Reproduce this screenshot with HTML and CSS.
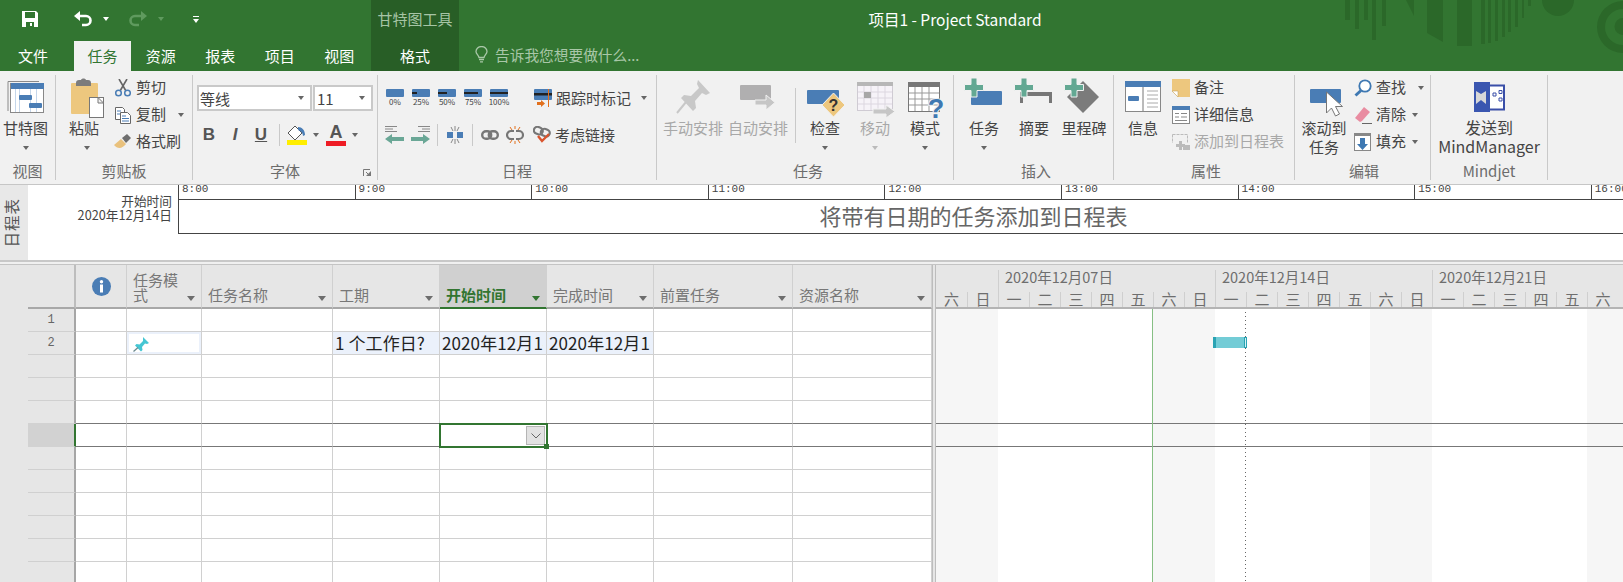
FILE: index.html
```html
<!DOCTYPE html>
<html lang="zh-CN">
<head>
<meta charset="utf-8">
<title>项目1 - Project Standard</title>
<link rel="stylesheet" href="styles.css">
</head>
<body>
<div class="app">
<header class="top">
  <svg class="deco" viewBox="0 0 300 71" width="300" height="71">
    <g fill="#2b6829">
      <path d="M22 0h5v20h-5zM32 0h4v29h-4zM41 0h4v20h-4zM49 0h4v40h-4zM59 0h4v26h-4z"/>
      <path d="M83 0h8v16zM104 0h16v42l-16-9zM134 0h15v46h-15z"/>
      <path d="M158 0h4v44h-4zM165 0h3v43h-3zM172 0h3v41h-3zM179 0h3v37h-3zM185 0h3v32h-3zM192 0h3v27h-3zM199 0h2v18h-2zM205 0h3v6h-3z"/>
      <circle cx="235" cy="0" r="16"/>
      <path d="M300 1a26 26 0 0 0 0 52v-8a18 18 0 0 1 0-36zM300 18a8 8 0 0 0 0 17z"/>
    </g>
  </svg>
  <div class="qat">
    <svg class="q-save" width="18" height="18" viewBox="0 0 18 18"><path fill="#fff" d="M1 1h14l2 2v14H1z"/><path fill="#327531" d="M4 2h10v6H4zM5 12h8v5H5z"/><path fill="#fff" d="M9 13h2v3H9z"/></svg>
    <svg class="q-undo" width="19" height="16" viewBox="0 0 19 16"><path fill="none" stroke="#fff" stroke-width="2.6" d="M4 5h8a4.500 4.500 0 0 1 0 9H8"/><path fill="#fff" d="M6 0v10L0 5z"/></svg>
    <i class="caret white q-c1"></i>
    <svg class="q-redo" width="19" height="16" viewBox="0 0 19 16"><path fill="none" stroke="#5f9a5e" stroke-width="2.600" d="M15 5H7a4.500 4.500 0 0 0 0 9h4"/><path fill="#5f9a5e" d="M13 0v10l6-5z"/></svg>
    <i class="caret dim q-c2"></i>
    <svg class="q-more" width="6" height="7" viewBox="0 0 6 7"><path fill="#fff" d="M0 0h6v1H0zM0 3h6L3 7z"/></svg>
  </div>
  <div class="ctx-title">甘特图工具</div>
  <div class="app-title">项目1 - Project Standard</div>
  <nav class="tabs">
    <span class="tab tab-file">文件</span>
    <span class="tab tab-on">任务</span>
    <span class="tab">资源</span>
    <span class="tab">报表</span>
    <span class="tab">项目</span>
    <span class="tab">视图</span>
  </nav>
  <div class="ctx-tab">格式</div>
  <div class="tell">
    <svg width="13" height="17" viewBox="0 0 13 17"><path fill="none" stroke="#a9c7a8" stroke-width="1.300" d="M4 11.500C3.500 9 1 8 1 5.500a5.500 5 0 0 1 11 0C12 8 9.500 9 9 11.500z"/><path stroke="#a9c7a8" stroke-width="1.300" d="M4 13.500h5M5 15.800h3"/></svg>
    <span>告诉我您想要做什么...</span>
  </div>
</header>

<section class="ribbon">
  <div class="g g-view">
    <div class="g-body">
      <div class="big w51">
        <svg class="ic" width="40" height="44" viewBox="0 0 40 44"><path fill="none" stroke="#8a8a8a" d="M2 36V6.500h31"/><rect x="4.500" y="8.500" width="33" height="29" fill="#fff" stroke="#888"/><rect x="5" y="8" width="33" height="6" fill="#4a7db5"/><path stroke="#c5d6ea" d="M9.500 14v23M13.500 14v23M24.500 14v23M30.500 14v23"/><rect x="13" y="20" width="13" height="5" rx="1" fill="#4a7db5"/><rect x="23" y="28" width="13" height="5" rx="1" fill="#4a7db5"/></svg>
        <span class="lb">甘特图</span><span class="cr"><i class="caret"></i></span>
      </div>
    </div>
    <div class="g-label">视图</div>
  </div>

  <div class="g g-clip">
    <div class="g-body row">
      <div class="big w56">
        <svg class="ic" width="40" height="44" viewBox="0 0 40 44"><rect x="7" y="8" width="27" height="31" rx="1" fill="#edc77e"/><path fill="#7c7c7c" d="M12 8c0-2 1-3 3-3h2c.5-2 4.500-2 5 0h2c2 0 3 1 3 3v3H12z"/><rect x="26.500" y="22.500" width="14" height="20" fill="#fff" stroke="#777" transform="translate(-1 0)"/><path fill="#f1f1f1" stroke="#777" d="M34 22.500l5.500 5.500H34z"/></svg>
        <span class="lb">粘贴</span><span class="cr cr-shift"><i class="caret"></i></span>
      </div>
      <div class="col">
        <div class="sm"><svg width="18" height="18" viewBox="0 0 18 18"><path stroke="#666" stroke-width="1.600" d="M5 0l7 12M13 0L6 12"/><g fill="none" stroke="#4a7db5" stroke-width="1.500"><circle cx="4.500" cy="14" r="2.800"/><circle cx="13.500" cy="14" r="2.800"/></g></svg><span>剪切</span></div>
        <div class="sm"><svg width="18" height="18" viewBox="0 0 18 18"><path fill="#fff" stroke="#666" d="M1.500 1.500h7l2 2v10h-9z"/><path fill="#fff" stroke="#666" d="M6.500 6.500h7l3 3v8h-10z"/><path stroke="#4a7db5" d="M3 5h4M3 8h3M8 10h4M8 12.500h7M8 15h7"/></svg><span>复制</span><i class="caret cp-c"></i></div>
        <div class="sm"><svg width="18" height="18" viewBox="0 0 18 18"><path fill="#e9c17c" d="M0 12l7-6 5 5c-3 4-8 6-12 1z"/><path fill="#6e6e6e" d="M8 5l5-4 4 4-5 5z"/></svg><span>格式刷</span></div>
      </div>
    </div>
    <div class="g-label">剪贴板</div>
  </div>

  <div class="g g-font">
    <div class="g-body">
      <div class="f-row1">
        <div class="sel-box sb-name"><span>等线</span><i class="caret"></i></div>
        <div class="sel-box sb-size"><span>11</span><i class="caret"></i></div>
      </div>
      <div class="f-row2">
        <span class="fb bold">B</span><span class="fb ital">I</span><span class="fb under">U</span>
        <i class="vsep f-sep"></i>
        <svg class="f-fill" width="20" height="22" viewBox="0 0 20 22"><path fill="#fff" stroke="#555" d="M8 2L1 9l7 7 7-7z"/><path fill="#4a7db5" d="M11 3c4 0 7 3 7 8l-2 1c0-3-2-5-5-6z"/><rect y="16" width="20" height="5" fill="#ffee00"/></svg>
        <i class="caret f-c1"></i>
        <span class="f-a">A<i></i></span>
        <i class="caret f-c2"></i>
      </div>
    </div>
    <div class="g-label">字体</div>
    <svg class="launch" width="8" height="8" viewBox="0 0 8 8"><path fill="none" stroke="#777" d="M.5 7V.5H7"/><path stroke="#777" d="M3 3l4 4"/><path fill="#777" d="M3 7h5V2z"/></svg>
  </div>

  <div class="g g-sched">
    <div class="g-body">
      <div class="s-row1">
        <div class="pct"><svg width="18" height="8" viewBox="0 0 18 8"><rect width="18" height="8" rx="1" fill="#4a7db5"/></svg><span>0%</span></div>
        <div class="pct"><svg width="18" height="8" viewBox="0 0 18 8"><rect width="18" height="8" rx="1" fill="#4a7db5"/><rect y="3" width="5" height="2" fill="#222"/></svg><span>25%</span></div>
        <div class="pct"><svg width="18" height="8" viewBox="0 0 18 8"><rect width="18" height="8" rx="1" fill="#4a7db5"/><rect y="3" width="9" height="2" fill="#222"/></svg><span>50%</span></div>
        <div class="pct"><svg width="18" height="8" viewBox="0 0 18 8"><rect width="18" height="8" rx="1" fill="#4a7db5"/><rect y="3" width="14" height="2" fill="#222"/></svg><span>75%</span></div>
        <div class="pct"><svg width="18" height="8" viewBox="0 0 18 8"><rect width="18" height="8" rx="1" fill="#4a7db5"/><rect y="3" width="18" height="2" fill="#222"/></svg><span>100%</span></div>
        <div class="sm track"><svg width="18" height="18" viewBox="0 0 18 18"><rect width="18" height="11" rx="1" fill="#4a7db5"/><rect y="4" width="18" height="2.500" fill="#222"/><path stroke="#e2701d" d="M14.500 0v18"/><path fill="#e2701d" d="M3 13h4v-2l4 3.500-4 3.500v-2H3z"/></svg><span>跟踪时标记</span><i class="caret tr-c"></i></div>
      </div>
      <div class="s-row2">
        <span class="tb"><svg width="20" height="18" viewBox="0 0 20 18"><path stroke="#888" d="M0 .5h12M0 3h8M0 5.500h12"/><path fill="#6aa796" d="M0 13l7-5v3h12v4H7v3z"/></svg></span>
        <span class="tb"><svg width="20" height="18" viewBox="0 0 20 18"><path stroke="#888" d="M8 .5h12M12 3h8M8 5.500h12"/><path fill="#6aa796" d="M20 13l-7-5v3H1v4h12v3z"/></svg></span>
        <i class="vsep s-sep"></i>
        <span class="tb"><svg width="16" height="18" viewBox="0 0 16 18"><rect y="6" width="6" height="6" fill="#4a7db5"/><rect x="10" y="6" width="6" height="6" fill="#4a7db5"/><path stroke="#888" d="M8 0v5M4 1l2 4M12 1l-2 4M8 13v5M4 17l2-4M12 17l-2-4"/></svg></span>
        <i class="vsep s-sep"></i>
        <span class="tb"><svg width="18" height="10" viewBox="0 0 18 10"><g fill="none" stroke="#777" stroke-width="2.400"><rect x="1.200" y="1.200" width="9" height="7.600" rx="3.800"/><rect x="7.800" y="1.200" width="9" height="7.600" rx="3.800"/></g></svg></span>
        <span class="tb"><svg width="18" height="18" viewBox="0 0 18 18"><path fill="none" stroke="#777" stroke-width="2.200" d="M8 5H5a4 4 0 0 0 0 8h3M10 5h3a4 4 0 0 1 0 8h-3"/><path stroke="#e2701d" d="M9 0v3M4 1l2 3M14 1l-2 3M9 15v3M4 17l2-3M14 17l-2-3"/></svg></span>
        <div class="sm consider"><svg width="18" height="18" viewBox="0 0 18 18"><g fill="none" stroke="#777" stroke-width="2.200"><rect x="1" y="1" width="9" height="7" rx="3.500" transform="rotate(20 5 4)"/><rect x="8" y="3" width="9" height="7" rx="3.500" transform="rotate(20 12 6)"/></g><path fill="none" stroke="#d9552e" stroke-width="2.400" d="M5 10l4 5 7-7"/></svg><span>考虑链接</span></div>
      </div>
    </div>
    <div class="g-label">日程</div>
  </div>

  <div class="g g-task">
    <div class="g-body row">
      <div class="big w60 off">
        <svg class="ic" width="40" height="44" viewBox="0 0 40 44"><path fill="#c8c8c8" d="M25 5l12 13-4 2-4-2-7 8 1 7-3 3L8 23l3-3 7 1 8-8-2-4z"/><path stroke="#c8c8c8" stroke-width="2" d="M13 27L4 38"/></svg>
        <span class="lb">手动安排</span>
      </div>
      <div class="big w60 off ml5">
        <svg class="ic" width="40" height="44" viewBox="0 0 40 44"><rect x="2" y="10" width="31" height="15" rx="1" fill="#b0afb0"/><path fill="#c6c6c6" stroke="#f1f1f1" d="M17 25h11v-5l9 7.500-9 7.500v-5H17z"/></svg>
        <span class="lb">自动安排</span>
      </div>
      <i class="vsep t-sep"></i>
      <div class="big w50">
        <svg class="ic" width="40" height="44" viewBox="0 0 40 44"><rect x="2" y="15" width="32" height="14" rx="1" fill="#4a7db5"/><path fill="#edc77e" stroke="#f1f1f1" d="M28.500 18L40 30 28.500 42 17 30z"/><text class="q-mark" x="28.500" y="36">?</text></svg>
        <span class="lb">检查</span><span class="cr"><i class="caret"></i></span>
      </div>
      <div class="big w50 off">
        <svg class="ic" width="40" height="44" viewBox="0 0 40 44"><rect x="2.500" y="7.500" width="35" height="28" fill="#f6f3f8" stroke="#cfcbd3"/><rect x="2" y="7" width="36" height="4" fill="#b7b7b7"/><path stroke="#dcd7e0" d="M9 11v24M16 11v24M23 11v24M30 11v24M3 17h34M3 23h34M3 29h34"/><rect x="9" y="17" width="7" height="6" fill="#a7a7a7"/><path fill="#c6c6c6" stroke="#f1f1f1" d="M18 34h13v-4l9 6.500-9 6.500v-4H18z"/></svg>
        <span class="lb">移动</span><span class="cr"><i class="caret pale"></i></span>
      </div>
      <div class="big w50">
        <svg class="ic" width="40" height="44" viewBox="0 0 40 44"><rect x="3.500" y="7.500" width="31" height="29" fill="#fff" stroke="#777"/><rect x="3" y="7" width="32" height="5" fill="#777"/><path stroke="#999" d="M10 12v24M17 12v24M24 12v24M4 18h30M4 24h30M4 30h30"/><text class="q-big" x="31" y="43">?</text></svg>
        <span class="lb">模式</span><span class="cr"><i class="caret"></i></span>
      </div>
    </div>
    <div class="g-label">任务</div>
  </div>

  <div class="g g-ins">
    <div class="g-body row">
      <div class="big w50">
        <svg class="ic" width="40" height="44" viewBox="0 0 40 44"><rect x="7" y="16" width="31" height="14" rx="1" fill="#4a7db5"/><path fill="#63a893" stroke="#f1f1f1" d="M7 3h6v6.500h6.500v6H13V22H7v-6.500H.5v-6H7z"/></svg>
        <span class="lb">任务</span><span class="cr"><i class="caret"></i></span>
      </div>
      <div class="big w50">
        <svg class="ic" width="40" height="44" viewBox="0 0 40 44"><path fill="#777" d="M6 17h32v11h-3v-7H9v7H6z"/><path fill="#63a893" stroke="#f1f1f1" d="M7 3h6v6.500h6.500v6H13V22H7v-6.500H.5v-6H7z"/></svg>
        <span class="lb">摘要</span>
      </div>
      <div class="big w50">
        <svg class="ic" width="40" height="44" viewBox="0 0 40 44"><path fill="#7b7b7b" d="M19 6l16 16-16 16L3 22z"/><path fill="#63a893" stroke="#f1f1f1" d="M7 3h6v6.500h6.500v6H13V22H7v-6.500H.5v-6H7z"/></svg>
        <span class="lb">里程碑</span>
      </div>
    </div>
    <div class="g-label">插入</div>
  </div>

  <div class="g g-prop">
    <div class="g-body row">
      <div class="big w50">
        <svg class="ic" width="40" height="44" viewBox="0 0 40 44"><rect x="2.500" y="6.500" width="35" height="30" fill="#fff" stroke="#888"/><rect x="2" y="6" width="36" height="6" fill="#4a7db5"/><path stroke="#777" d="M20 12v24"/><rect x="5" y="21" width="11" height="5" rx="1" fill="#4a7db5"/><path stroke="#aaa" d="M24 16h11M24 20h11M24 24h11M24 28h11M24 32h11"/></svg>
        <span class="lb">信息</span>
      </div>
      <div class="col ml4">
        <div class="sm"><svg width="18" height="18" viewBox="0 0 18 18"><path fill="#edc77e" d="M0 0h18v18H6l-6-6z"/><path fill="#fff" stroke="#c8a55f" d="M6 18v-6H0z" stroke-width=".6"/></svg><span>备注</span></div>
        <div class="sm"><svg width="18" height="18" viewBox="0 0 18 18"><rect x=".5" y=".5" width="17" height="17" fill="#fff" stroke="#888"/><rect width="18" height="4" fill="#4a7db5"/><path stroke="#888" d="M3 7.500h4M9 7.500h6M3 11h4M9 11h6M3 14.500h12"/></svg><span>详细信息</span></div>
        <div class="sm off"><svg width="18" height="18" viewBox="0 0 18 18"><path fill="none" stroke="#bbb" stroke-dasharray="3 1" d="M.5 1.500h15V10M.5 1.500V10"/><path fill="#bbb" d="M7 8h3v3h3v3h-3v3H7v-3H4v-3h3z"/><rect x="11" y="12" width="7" height="5" fill="#bbb"/></svg><span>添加到日程表</span></div>
      </div>
    </div>
    <div class="g-label">属性</div>
  </div>

  <div class="g g-edit">
    <div class="g-body row">
      <div class="big w52">
        <svg class="ic" width="40" height="44" viewBox="0 0 40 44"><rect x="6" y="14" width="31" height="14" rx="1" fill="#4a7db5"/><path fill="#fff" stroke="#777" d="M22.500 17v21l5-5 4 8 4-2-4-7.500h7z"/></svg>
        <span class="lb">滚动到<br>任务</span>
      </div>
      <div class="col ml4">
        <div class="sm"><svg width="18" height="18" viewBox="0 0 18 18"><circle cx="11" cy="7" r="5.700" fill="#fff" stroke="#3e78b2" stroke-width="1.800"/><path stroke="#3e78b2" stroke-width="3" d="M7 11.500L1.500 16.500"/></svg><span>查找</span><i class="caret ed-c1"></i></div>
        <div class="sm"><svg width="18" height="18" viewBox="0 0 18 18"><path fill="#e98ca1" d="M10 1l6 5-8 9-2 1-5-4z"/><path stroke="#666" d="M8 17.500h10"/></svg><span>清除</span><i class="caret ed-c2"></i></div>
        <div class="sm"><svg width="18" height="18" viewBox="0 0 18 18"><rect x=".5" y=".5" width="16" height="17" fill="#fff" stroke="#888"/><rect width="17" height="3" fill="#888"/><path fill="#3e78b2" d="M6 5h5v6h3l-5.500 6L3 11h3z"/></svg><span>填充</span><i class="caret ed-c2"></i></div>
      </div>
    </div>
    <div class="g-label">编辑</div>
  </div>

  <div class="g g-mind">
    <div class="g-body row">
      <div class="big wfull">
        <svg class="ic" width="40" height="44" viewBox="0 0 40 44"><rect x="20" y="10.500" width="15" height="24" fill="#fff" stroke="#3a4fa8" stroke-width="2"/><rect x="5" y="7" width="16" height="30" fill="#3a56b0"/><path fill="#d8d8d8" d="M7 16l5 3 5-3v13l-5-4-5 4z"/><path fill="none" stroke="#3a4fa8" d="M24 18h3v3h-3zM30 15.500h3v3h-3zM30 23h3v3h-3z"/></svg>
        <span class="lb lb-latin">发送到<br>MindManager</span>
      </div>
    </div>
    <div class="g-label">Mindjet</div>
  </div>
</section>

<section class="tl">
  <div class="tl-side"><span>日程表</span></div>
  <div class="tl-labels">开始时间<br>2020年12月14日</div>
  <div class="tl-main">
    <div class="ruler">
      <span>8:00</span><span>9:00</span><span>10:00</span><span>11:00</span><span>12:00</span><span>13:00</span><span>14:00</span><span>15:00</span><span>16:00</span>
    </div>
    <div class="tl-box">将带有日期的任务添加到日程表</div>
  </div>
</section>

<section class="main">
  <div class="strip"></div>
  <div class="sheet">
    <div class="hd hd-corner"></div>
    <div class="hd hd-info"><svg width="19" height="19" viewBox="0 0 19 19"><circle cx="9.500" cy="9.500" r="9.500" fill="#4a7db5"/><circle cx="9.500" cy="4.800" r="1.700" fill="#fff"/><rect x="8" y="7.500" width="3" height="8" fill="#fff"/></svg></div>
    <div class="hd"><span>任务模<br>式</span><i class="dd"></i></div>
    <div class="hd"><span>任务名称</span><i class="dd"></i></div>
    <div class="hd"><span>工期</span><i class="dd"></i></div>
    <div class="hd hd-on"><span>开始时间</span><i class="dd"></i></div>
    <div class="hd"><span>完成时间</span><i class="dd"></i></div>
    <div class="hd"><span>前置任务</span><i class="dd"></i></div>
    <div class="hd"><span>资源名称</span><i class="dd"></i></div>

    <div class="rh">1</div><div class="c"></div><div class="c"></div><div class="c"></div><div class="c"></div><div class="c"></div><div class="c"></div><div class="c"></div><div class="c"></div>

    <div class="rh">2</div><div class="c"></div>
    <div class="c c-pin"><svg width="16" height="15" viewBox="0 0 16 15"><path fill="#45c6d3" d="M10 0l6 6-2 1-2-.5-3 3.500.5 3-1.500 1.500L2 8.500 3.500 7l3 .5L10 4z"/><path stroke="#6d8a8f" stroke-width="1.300" d="M5 10.500L.5 14.500"/></svg></div>
    <div class="c"></div>
    <div class="c c-edit"><span class="clip">1 个工作日?</span></div>
    <div class="c c-edit"><span class="clip">2020年12月14日</span></div>
    <div class="c c-edit"><span class="clip">2020年12月14日</span></div>
    <div class="c"></div><div class="c"></div>

    <div class="rh"></div><div class="c"></div><div class="c"></div><div class="c"></div><div class="c"></div><div class="c"></div><div class="c"></div><div class="c"></div><div class="c"></div>
    <div class="rh"></div><div class="c"></div><div class="c"></div><div class="c"></div><div class="c"></div><div class="c"></div><div class="c"></div><div class="c"></div><div class="c"></div>
    <div class="rh pre"></div><div class="c pre"></div><div class="c pre"></div><div class="c pre"></div><div class="c pre"></div><div class="c pre"></div><div class="c pre"></div><div class="c pre"></div><div class="c pre"></div>

    <div class="rh rh-sel"></div><div class="c pre"></div><div class="c pre"></div><div class="c pre"></div><div class="c pre"></div>
    <div class="c pre c-active"><span class="drop"><svg width="10" height="6" viewBox="0 0 10 6"><path fill="none" stroke="#666" d="M.5.500L5 5l4.500-4.500"/></svg></span><i class="handle"></i></div>
    <div class="c pre"></div><div class="c pre"></div><div class="c pre"></div>

    <div class="rh"></div><div class="c"></div><div class="c"></div><div class="c"></div><div class="c"></div><div class="c"></div><div class="c"></div><div class="c"></div><div class="c"></div>
    <div class="rh"></div><div class="c"></div><div class="c"></div><div class="c"></div><div class="c"></div><div class="c"></div><div class="c"></div><div class="c"></div><div class="c"></div>
    <div class="rh"></div><div class="c"></div><div class="c"></div><div class="c"></div><div class="c"></div><div class="c"></div><div class="c"></div><div class="c"></div><div class="c"></div>
    <div class="rh"></div><div class="c"></div><div class="c"></div><div class="c"></div><div class="c"></div><div class="c"></div><div class="c"></div><div class="c"></div><div class="c"></div>
    <div class="rh"></div><div class="c"></div><div class="c"></div><div class="c"></div><div class="c"></div><div class="c"></div><div class="c"></div><div class="c"></div><div class="c"></div>
    <div class="rh"></div><div class="c"></div><div class="c"></div><div class="c"></div><div class="c"></div><div class="c"></div><div class="c"></div><div class="c"></div><div class="c"></div>
  </div>
  <div class="split"></div>
  <div class="gantt">
    <div class="g-head">
      <div class="wk wk-lead"></div>
      <div class="wk">2020年12月07日</div>
      <div class="wk">2020年12月14日</div>
      <div class="wk">2020年12月21日</div>
      <div class="dy dy-first">六</div><div class="dy">日</div>
      <div class="dy">一</div><div class="dy">二</div><div class="dy">三</div><div class="dy">四</div><div class="dy">五</div><div class="dy">六</div><div class="dy">日</div>
      <div class="dy">一</div><div class="dy">二</div><div class="dy">三</div><div class="dy">四</div><div class="dy">五</div><div class="dy">六</div><div class="dy">日</div>
      <div class="dy">一</div><div class="dy">二</div><div class="dy">三</div><div class="dy">四</div><div class="dy">五</div><div class="dy">六</div>
    </div>
    <div class="g-body-area">
      <div class="band off-day"></div><div class="band work"></div>
      <div class="band off-day"></div><div class="band work"></div>
      <div class="band off-day"></div><div class="band work"></div>
      <div class="band off-day"></div>
      <i class="sel-line sl-a"></i><i class="sel-line sl-b"></i>
      <i class="status-line"></i>
      <i class="today-line"></i>
      <div class="bar"><i class="bar-end"></i></div>
    </div>
  </div>
</section>
</div>
</body>
</html>
```

FILE: styles.css
```css
* { box-sizing: border-box; }
html, body { margin: 0; padding: 0; }
body {
  width: 1623px; height: 582px; overflow: hidden;
  background: #f0f0f0; color: #444;
  font-family: "Noto Sans CJK SC", "Noto Sans", sans-serif;
}
.app { width: 1623px; height: 582px; overflow: hidden; }
i { display: block; font-style: normal; }

/* title bar */
.top {
  position: relative; display: grid;
  grid-template-columns: 371px 88px 1fr;
  grid-template-rows: 41px 30px;
  background: #327531; color: #fff;
}
.deco { position: absolute; top: 0; right: 0; }
.qat { position: relative; display: flex; align-items: center; }
.q-save { margin-left: 21px; margin-top: -3px; }
.q-undo { margin-left: 35px; margin-top: -3px; }
.q-c1 { margin-left: 10px; margin-top: -3px; }
.q-redo { margin-left: 19px; margin-top: -3px; }
.q-c2 { margin-left: 11px; margin-top: -3px; }
.q-more { margin-left: 29px; margin-top: -3px; }
.ctx-title {
  background: #285e26; color: #a6c4a5; font-size: 15px;
  display: flex; align-items: center; justify-content: center; padding-bottom: 4px;
}
.app-title {
  position: relative; font-size: 15.500px; padding: 0 172px 4px 0;
  display: flex; align-items: center; justify-content: center;
}
.tabs { display: flex; font-size: 15px; height: 30px; }
.tab { width: 59.500px; display: flex; align-items: center; justify-content: center; padding-bottom: 2px; }
.tab-file { width: 74px; padding-right: 8px; }
.tab-on { width: 57px; background: #f1f1f1; color: #327531; }
.ctx-tab {
  background: #285e26; font-size: 15px;
  display: flex; align-items: center; justify-content: center; padding-bottom: 2px;
}
.tell {
  position: relative; display: flex; align-items: center; gap: 7px;
  padding: 0 0 3px 16px; color: #a9c7a8; font-size: 14.700px;
}

/* carets */
.caret {
  width: 0; height: 0; flex: none;
  border-left: 3.500px solid transparent; border-right: 3.500px solid transparent;
  border-top: 4px solid #666;
}
.caret.white { border-top-color: #fff; }
.caret.dim { border-top-color: #5f9a5e; }
.caret.pale { border-top-color: #bbb; }

/* ribbon */
.ribbon {
  display: flex; height: 114px; padding-top: 4px;
  background: #f1f1f1; border-bottom: 1px solid #c6c6c6;
}
.g {
  position: relative; display: flex; flex-direction: column;
  height: 105px; border-right: 1px solid #c9c9c9; flex: none;
}
.g-view { width: 56px; }
.g-clip { width: 137px; }
.g-font { width: 185px; }
.g-sched { width: 279px; }
.g-task { width: 297px; padding-left: 6px; }
.g-ins { width: 160px; padding-left: 5px; }
.g-prop { width: 181px; padding-left: 4px; }
.g-edit { width: 136px; padding-left: 3px; }
.g-mind { width: 117px; }
.g-body { flex: 1; min-height: 0; }
.g-body.row { display: flex; }
.g-label {
  height: 15px; line-height: 15px; text-align: center;
  font-size: 15px; color: #6c6c6c;
  margin-top: auto; transform: translateY(-2px);
}
.big { display: flex; flex-direction: column; align-items: center; flex: none; font-size: 15px; }
.ic { display: block; flex: none; }
.lb { line-height: 19px; text-align: center; white-space: nowrap; margin-top: -1px; }
.lb-latin { font-size: 16px; }
.cr { height: 19px; margin-top: 1px; display: flex; align-items: center; justify-content: center; }
.cr-shift { padding-left: 6px; }
.w50 { width: 50px; }
.w51 { width: 51px; }
.w52 { width: 52px; }
.w56 { width: 56px; }
.w60 { width: 60px; }
.wfull { width: 116px; }
.ml4 { margin-left: 4px; }
.ml5 { margin-left: 5px; }
.off, .off .lb { color: #a8a8a8; }
.col { display: flex; flex-direction: column; margin-top: -1px; }
.sm { display: flex; align-items: center; height: 27px; font-size: 15px; white-space: nowrap; }
.sm span { margin: -2px 0 0 4px; }
.g-clip .col { margin-left: 2px; }
.cp-c { margin-left: 12px; }
.ed-c1 { margin-left: 12px; }
.ed-c2 { margin-left: 6px; }
.vsep { width: 1px; background: #c9c9c9; flex: none; }

/* font group */
.f-row1 { display: flex; margin: 10px 0 0 4px; gap: 1px; }
.sel-box {
  display: flex; align-items: center; justify-content: space-between;
  height: 26px; background: #fff; border: 2px solid #c9c9c9;
  font-size: 15px; padding: 0 6px 0 1px;
}
.sb-name { width: 115px; }
.sb-size { width: 60px; padding-left: 2px; }
.f-row2 { display: flex; align-items: center; height: 26px; margin: 11px 0 0 3px; }
.fb { width: 26px; text-align: center; font-size: 17px; font-family: "Liberation Sans", sans-serif; color: #555; font-weight: 700; }
.ital { font-style: italic; }
.under { text-decoration: underline; }
.f-sep { height: 22px; margin-left: 5px; }
.f-fill { margin-left: 7px; }
.f-c1 { margin-left: 6px; }
.f-a {
  display: block; width: 20px; margin-left: 7px; text-align: center;
  font: 700 18px/17px "Liberation Sans", sans-serif; color: #555;
}
.f-a i { height: 5px; background: #ee1c25; }
.f-c2 { margin-left: 6px; }
.launch { position: absolute; right: 6px; bottom: 3px; }

/* schedule group */
.g-sched .g-body { padding-left: 4px; }
.s-row1 { display: flex; align-items: flex-start; margin-top: 14px; height: 18px; }
.pct { width: 26px; display: flex; flex-direction: column; align-items: center; }
.pct svg { display: block; }
.pct span { font-size: 8px; line-height: 10px; color: #444; white-space: nowrap; }
.track { height: 18px; margin-left: 22px; }
.tr-c { margin-left: 10px; }
.s-row2 { display: flex; align-items: center; height: 18px; margin-top: 19px; }
.tb { width: 25px; display: flex; justify-content: center; align-items: center; }
.s-sep { height: 22px; margin: 0 4px 0 5px; }
.consider { height: 18px; margin-left: 6px; }
.t-sep { height: 55px; margin: 13px 4px 0 7px; }

/* timeline */
.tl { display: flex; height: 77px; background: #fff; border-bottom: 2px solid #c8c8c8; }
.tl-side {
  width: 28px; background: #e8e8e8; display: flex; align-items: center; justify-content: center;
  padding-right: 6px; flex: none;
}
.tl-side span {
  writing-mode: vertical-rl; text-orientation: sideways; transform: rotate(180deg);
  font-size: 15.500px; letter-spacing: 1px; color: #555;
}
.tl-labels {
  width: 150px; flex: none; text-align: right; padding: 9px 6px 0 0;
  font-size: 12.700px; line-height: 14px; color: #444;
}
.tl-main { flex: 1; overflow: hidden; min-width: 0; }
.ruler { display: flex; height: 14px; overflow: hidden; }
.ruler span {
  flex: none; width: 176.600px; border-left: 1px solid #444; padding-left: 3px;
  font: 11px/8px "Liberation Mono", monospace; color: #444;
}
.tl-box {
  height: 35px; width: 1600px; border: 1px solid #444; border-right: 0;
  text-align: center; font-size: 22px; line-height: 30px; color: #666;
  padding-right: 10px;
}

/* table */
.main { display: flex; height: 318px; margin-top: 2px; border-top: 1px solid #c4c4c4; overflow: hidden; }
.strip { width: 28px; background: #e6e6e6; flex: none; }
.sheet {
  display: grid; flex: none;
  grid-template-columns: 48px 51px 75px 131px 107px 107px 107px 139px 139px;
  grid-auto-rows: 23px; grid-template-rows: 44px;
  background: #fff;
}
.hd {
  position: relative; display: flex; align-items: flex-end;
  background: #e6e6e6; color: #777; font-size: 15px; line-height: 15px;
  border-right: 1px solid #d0d0d0; border-bottom: 2px solid #a8a8a8;
  padding: 0 0 5px 6px;
}
.hd-corner { border-right: 2px solid #bdbdbd; }
.hd-info { align-items: center; justify-content: center; padding: 0; }
.dd {
  position: absolute; right: 6px; bottom: 6px; width: 0; height: 0;
  border-left: 4px solid transparent; border-right: 4px solid transparent;
  border-top: 5px solid #6d6d6d;
}
.hd-on { background: #d0d0d0; color: #327531; font-weight: 700; border-bottom-color: #327531; }
.hd-on .dd { border-top-color: #327531; }
.rh {
  background: #e6e6e6; border-right: 2px solid #a6a6a6; border-bottom: 1px solid #d0d0d0;
  font: 12px/22px "Liberation Mono", monospace; color: #666; text-align: center;
}
.c {
  position: relative; min-width: 0; overflow: hidden; white-space: nowrap;
  border-right: 1px solid #d0d0d0; border-bottom: 1px solid #d0d0d0;
  background: #fff;
}
.c-pin { padding: 5px 0 0 6px; box-shadow: inset 0 0 0 2px #ebf1fb; }
.c-pin svg { display: block; }
.c-edit { background: #ebf1fb; font-size: 17px; line-height: 22px; padding-left: 2px; color: #222; }
.clip { display: block; overflow: hidden; margin-right: 3px; letter-spacing: .1px; }
.pre { border-bottom-color: #777; }
.rh.pre { border-bottom-color: #d2d2d2; }
.rh-sel { background: #d2d2d2; border-right-color: #327531; border-bottom-color: #d2d2d2; }
.c-active { overflow: visible; outline: 2px solid #327531; outline-offset: -1px; z-index: 2; }
.drop {
  position: absolute; right: 1px; top: 2px; width: 19px; height: 19px;
  background: #e2e2e2; border: 1px solid #b5b5b5;
  display: flex; align-items: center; justify-content: center;
}
.handle { position: absolute; right: -3px; bottom: -3px; width: 5px; height: 5px; background: #327531; }

/* gantt */
.split { width: 4px; flex: none; background: #e6e6e6; border-left: 1px solid #bdbdbd; border-right: 1px solid #bdbdbd; }
.gantt { flex: 1; min-width: 0; overflow: hidden; background: #fff; }
.g-head {
  display: grid; width: 700px; height: 44px;
  grid-template-columns: repeat(23, 31px); grid-template-rows: 27px 15px;
  background: #e6e6e6; border-bottom: 2px solid #b4b4b4; color: #6e6e6e;
}
.wk { grid-column: span 7; font-size: 14.500px; line-height: 14px; padding-left: 6px; white-space: nowrap; border-left: 1px solid #cfcfcf; margin-top: 5px; }
.wk-lead { grid-column: span 2; border-left: 0; }
.dy { font-size: 15px; line-height: 13px; text-align: center; border-left: 1px solid #cfcfcf; }
.dy-first { border-left: 0; }
.g-body-area { position: relative; display: flex; height: 274px; width: 700px; }
.band { flex: none; }
.off-day { width: 62px; background: #f6f6f6; }
.work { width: 155px; background: #fff; }
.sel-line { position: absolute; left: 0; right: 0; height: 1px; background: #777; }
.sl-a { top: 114px; }
.sl-b { top: 137px; }
.status-line { position: absolute; top: 0; bottom: 0; left: 216px; width: 1px; background: #86bf84; }
.today-line {
  position: absolute; top: 3px; bottom: 0; left: 309px; width: 1px;
  background: repeating-linear-gradient(#666 0 1px, transparent 1px 4px);
}
.bar {
  position: absolute; left: 277px; top: 28px; width: 34px; height: 11px;
  background: #73ccd6; border-left: 3px solid #29a3b3;
}
.bar-end { position: absolute; right: 0; top: 0; width: 3px; height: 11px; border: 1px solid #29a3b3; background: #d9f1f4; }

/* svg text */
.q-mark { font: 700 16px "Liberation Sans", sans-serif; fill: #333; text-anchor: middle; }
.q-big {
  font: 700 27px "Liberation Sans", sans-serif; fill: #3e78b2; text-anchor: middle;
  stroke: #f1f1f1; stroke-width: 2px; paint-order: stroke;
}
```
